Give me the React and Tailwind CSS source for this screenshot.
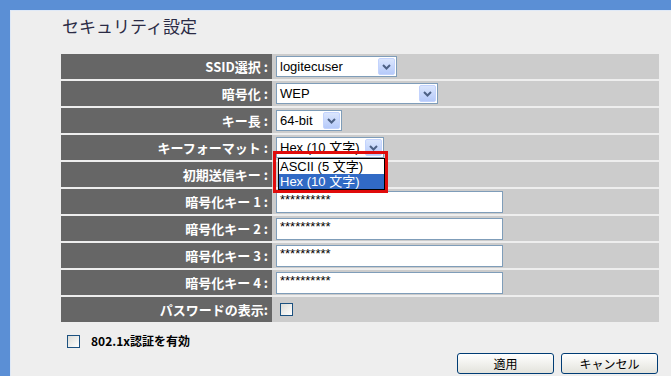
import React from "react";

const font = { fontFamily: '"Noto Sans CJK JP", "Liberation Sans", sans-serif' };
const uiFont = { fontFamily: '"Liberation Sans", "Noto Sans CJK JP", sans-serif' };

function Arrow() {
  return (
    <span className="flex h-[17px] w-[17px] items-center justify-center rounded-[2px] border border-[#c3d3fd] bg-gradient-to-b from-[#dbe6fd] to-[#b6cafa]">
      <svg width="9" height="6" viewBox="0 0 9 6">
        <path d="M1 1 L4.5 4.5 L8 1" stroke="#4d6185" strokeWidth="2" fill="none" />
      </svg>
    </span>
  );
}

function Select({ value, width }) {
  return (
    <div
      className="flex h-[21px] items-center justify-between border border-[#7f9db9] bg-white pl-[3px] pr-[1px] text-[13px] text-black"
      style={{ width, ...uiFont }}
    >
      <span className="leading-none">{value}</span>
      <Arrow />
    </div>
  );
}

function TextBox() {
  return (
    <div className="flex h-[22px] w-[227px] items-start border border-[#7f9db9] bg-white pl-[3px] pt-[1px] text-[13px] leading-[13px] text-black" style={uiFont}>
      **********
    </div>
  );
}

function Row({ label, children }) {
  return (
    <div className="relative flex h-[25px]">
      <div
        className="flex w-[211px] items-center justify-end bg-[#666666] pr-[4px] text-[13px] font-bold text-white"
        style={font}
      >
        {label}
      </div>
      <div className="flex flex-1 items-center bg-[#cccccc] pl-[4px]">{children}</div>
    </div>
  );
}

export default function App() {
  return (
    <div className="h-[376px] w-[671px] overflow-hidden bg-[#5b8fd5] pl-[10px] pt-[10px]">
      <div className="h-full w-full border-l border-t border-[#dfe9f7] bg-[#eeeeee]">
        <div className="pl-[51px] pt-[3px] text-[17px] leading-[24px] text-[#2b2b45]" style={font}>
          セキュリティ設定
        </div>
        <div className="ml-[50px] mt-[16px] flex w-[598px] flex-col gap-[2px]">
          <Row label="SSID選択 :">
            <Select value="logitecuser" width={121} />
          </Row>
          <Row label="暗号化 :">
            <Select value="WEP" width={162} />
          </Row>
          <Row label="キー長 :">
            <Select value="64-bit" width={66} />
          </Row>
          <Row label="キーフォーマット :">
            <div className="relative">
              <Select value="Hex (10 文字)" width={108} />
              <div className="absolute left-[2px] top-[21px] z-10 w-[107px] border border-black bg-white text-[13px] leading-[15px]" style={uiFont}>
                <div className="pl-[1px] text-black">ASCII (5 文字)</div>
                <div className="bg-[#316ac5] pl-[1px] text-white">Hex (10 文字)</div>
              </div>
              <div className="absolute left-[-3px] top-[14px] z-20 h-[42px] w-[115px] border-[3px] border-[#e00b0b]" />
            </div>
          </Row>
          <Row label="初期送信キー :">
            <div />
          </Row>
          <Row label="暗号化キー 1 :">
            <TextBox />
          </Row>
          <Row label="暗号化キー 2 :">
            <TextBox />
          </Row>
          <Row label="暗号化キー 3 :">
            <TextBox />
          </Row>
          <Row label="暗号化キー 4 :">
            <TextBox />
          </Row>
          <Row label="パスワードの表示:">
            <span className="ml-[4px] h-[13px] w-[13px] border border-[#1c5180] bg-gradient-to-br from-[#dcdcd7] to-white" />
          </Row>
        </div>
        <div className="ml-[56px] mt-[10px] flex items-center gap-[11px]">
          <span className="h-[13px] w-[13px] border border-[#1c5180] bg-gradient-to-br from-[#dcdcd7] to-white" />
          <span className="text-[12px] font-bold text-black" style={font}>
            802.1x認証を有効
          </span>
        </div>
        <div className="ml-[446px] mt-[3px] flex gap-[7px]">
          <button
            className="h-[21px] w-[97px] rounded-[3px] border border-[#003c74] bg-gradient-to-b from-white to-[#e3e3dc] text-[12px] text-black"
            style={font}
          >
            適用
          </button>
          <button
            className="h-[21px] w-[97px] rounded-[3px] border border-[#003c74] bg-gradient-to-b from-white to-[#e3e3dc] text-[12px] text-black"
            style={font}
          >
            キャンセル
          </button>
        </div>
      </div>
    </div>
  );
}
